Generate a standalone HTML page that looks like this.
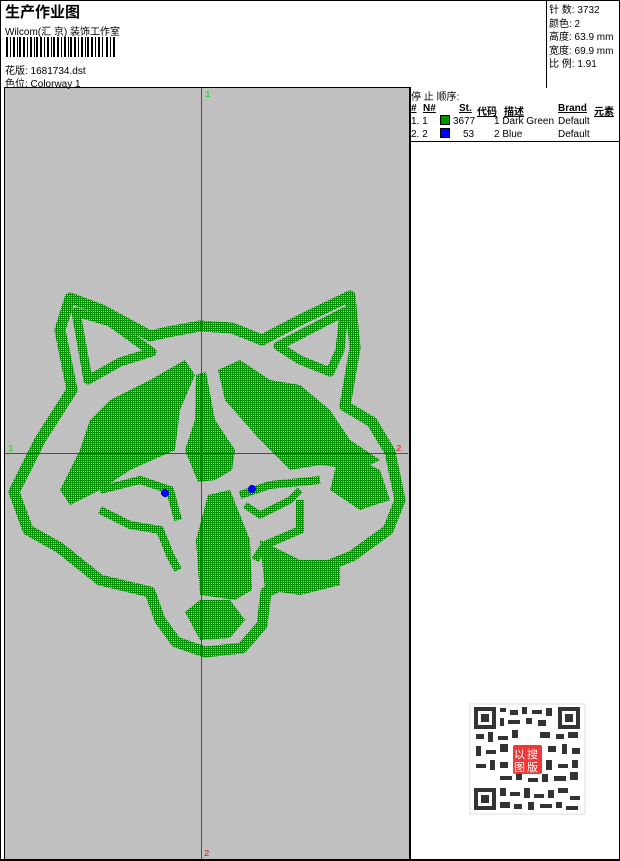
<!DOCTYPE html>
<html><head><meta charset="utf-8"><style>
*{margin:0;padding:0;box-sizing:border-box}
body{width:620px;height:861px;background:#fff;position:relative;overflow:hidden;font-family:"Liberation Sans","Noto Sans CJK SC",sans-serif;font-size:10px;color:#000}
.a{position:absolute;white-space:nowrap}
</style></head><body>
<div class="a" style="left:0;top:0;width:620px;height:861px;border:1px solid #000;border-bottom:2px solid #000"></div>
<div class="a" style="left:546px;top:0;width:1px;height:88px;background:#000"></div>
<div class="a" style="left:4px;top:87px;width:405px;height:772px;background:#c0c0c0;border-left:1px solid #000;border-top:1px solid #000"></div>
<div class="a" style="left:409px;top:87px;width:2px;height:773px;background:#000"></div>
<div class="a" style="left:410px;top:141px;width:210px;height:1px;background:#000"></div>
<div class="a" style="left:5px;top:1px;font-size:15px;font-weight:bold">生产作业图</div>
<div class="a" style="left:5px;top:23px;font-size:10px">Wilcom(汇 京) 装饰工作室</div>
<svg class="a" style="left:6px;top:37px" width="112" height="20">
<g fill="#000">
<rect x="0" width="2" height="20"/><rect x="4" width="1" height="20"/><rect x="7" width="2" height="20"/><rect x="11" width="1" height="20"/><rect x="13" width="2" height="20"/><rect x="17" width="2" height="20"/><rect x="21" width="1" height="20"/><rect x="24" width="2" height="20"/><rect x="28" width="1" height="20"/><rect x="30" width="2" height="20"/><rect x="34" width="2" height="20"/><rect x="38" width="1" height="20"/><rect x="41" width="2" height="20"/><rect x="45" width="1" height="20"/><rect x="47" width="2" height="20"/><rect x="51" width="2" height="20"/><rect x="55" width="1" height="20"/><rect x="58" width="2" height="20"/><rect x="62" width="1" height="20"/><rect x="64" width="2" height="20"/><rect x="68" width="2" height="20"/><rect x="72" width="1" height="20"/><rect x="75" width="2" height="20"/><rect x="79" width="1" height="20"/><rect x="81" width="2" height="20"/><rect x="85" width="2" height="20"/><rect x="89" width="1" height="20"/><rect x="92" width="2" height="20"/><rect x="96" width="1" height="20"/><rect x="100" width="2" height="20"/><rect x="104" width="1" height="20"/><rect x="107" width="2" height="20"/>
</g></svg>
<div class="a" style="left:5px;top:62px">花版: 1681734.dst</div>
<div class="a" style="left:5px;top:75px">色位: Colorway 1</div>
<div class="a" style="left:549px;top:4px;line-height:13.5px">针 数: 3732<br>颜色: 2<br>高度: 63.9 mm<br>宽度: 69.9 mm<br>比 例: 1.91</div>
<div class="a" style="left:411px;top:88px">停 止 顺序:</div>
<div class="a" style="left:411px;top:103px;font-weight:bold;text-decoration:underline">#</div>
<div class="a" style="left:423px;top:103px;font-weight:bold;text-decoration:underline">N#</div>
<div class="a" style="left:459px;top:103px;font-weight:bold;text-decoration:underline">St.</div>
<div class="a" style="left:477px;top:103px;font-weight:bold;text-decoration:underline">代码</div>
<div class="a" style="left:504px;top:103px;font-weight:bold;text-decoration:underline">描述</div>
<div class="a" style="left:558px;top:103px;font-weight:bold;text-decoration:underline">Brand</div>
<div class="a" style="left:594px;top:103px;font-weight:bold;text-decoration:underline">元素</div>
<div class="a" style="left:411px;top:116px">1. 1</div>
<div class="a" style="left:440px;top:115px;width:10px;height:10px;background:#009000;border:1px solid #000"></div>
<div class="a" style="left:453px;top:116px">3677</div>
<div class="a" style="left:494px;top:116px">1 Dark Green</div>
<div class="a" style="left:558px;top:116px">Default</div>
<div class="a" style="left:411px;top:129px">2. 2</div>
<div class="a" style="left:440px;top:128px;width:10px;height:10px;background:#0000ff;border:1px solid #000"></div>
<div class="a" style="left:463px;top:129px">53</div>
<div class="a" style="left:494px;top:129px">2 Blue</div>
<div class="a" style="left:558px;top:129px">Default</div>
<svg class="a" style="left:0;top:0" width="620" height="861" shape-rendering="crispEdges">
<defs>
<pattern id="h" width="2" height="2" patternUnits="userSpaceOnUse"><rect width="1" height="2" fill="#009000"/><rect x="1" y="0" width="1" height="1" fill="#009000"/></pattern>
<pattern id="v" width="2" height="2" patternUnits="userSpaceOnUse"><rect width="2" height="1" fill="#009000"/><rect x="0" y="1" width="1" height="1" fill="#009000"/></pattern>
</defs>
<g fill="none" stroke="url(#h)" stroke-width="11" stroke-linejoin="round">
<path d="M70,298 L60,330 L72,390 L40,440 L14,492 L28,530 L60,548 L100,580 L150,592 L160,620 L176,642 L205,652 L242,648 L262,625 L266,592 L300,577 L352,556 L388,530 L400,500 L390,452 L372,422 L345,406 L355,348 L350,296 L300,320 L262,340 L232,328 L200,326 L168,332 L150,336 L102,310 Z"/>
<path d="M76,312 L88,380 L120,362 L152,352 L110,322 Z" stroke-width="9"/>
<path d="M344,312 L340,350 L330,372 L300,360 L278,346 Z" stroke-width="9"/>
<path d="M100,490 L140,480 L170,490 L178,520" stroke-width="8"/>
<path d="M240,495 L270,485 L320,480" stroke-width="8"/>
<path d="M245,505 L260,515 L290,500 L300,490" stroke-width="7"/>
<path d="M100,510 L130,525 L160,530 L170,555 L178,570" stroke-width="8"/>
<path d="M300,500 L300,530 L265,545 L255,560" stroke-width="8"/>
</g>
<g fill="url(#h)">
<path d="M90,420 L110,400 L150,380 L185,360 L195,375 L180,410 L175,450 L130,470 L100,490 L70,505 L60,490 L80,450 Z"/>
<path d="M218,370 L240,360 L270,380 L300,385 L330,410 L350,440 L380,460 L360,470 L320,465 L290,470 L260,440 L225,400 Z"/>
<path d="M340,450 L380,470 L390,500 L360,510 L330,490 Z"/>
<path d="M260,540 L300,560 L340,560 L340,585 L300,595 L265,590 Z"/>
<path d="M185,612 L200,600 L230,600 L245,620 L230,638 L200,640 Z"/>
</g>
<g fill="url(#v)">
<path d="M196,375 L206,372 L215,420 L235,450 L232,470 L215,480 L198,482 L185,450 L195,420 Z"/>
<path d="M208,495 L230,490 L250,540 L252,590 L235,600 L200,595 L196,540 Z"/>
</g>
<g fill="#0000ff"><circle cx="165" cy="493" r="4"/><circle cx="252" cy="489" r="4"/></g>
<rect x="201" y="88" width="1" height="771" fill="#ff0000"/>
<rect x="5" y="453" width="403" height="1" fill="#ff0000"/>
<text x="205" y="97" fill="#00e000" font-size="9" font-family="Liberation Mono,monospace">1</text>
<text x="8" y="451" fill="#00e000" font-size="9" font-family="Liberation Mono,monospace">1</text>
<text x="396" y="451" fill="#f00" font-size="9" font-family="Liberation Mono,monospace">2</text>
<text x="204" y="856" fill="#f00" font-size="9" font-family="Liberation Mono,monospace">2</text>
<rect x="470" y="704" width="115" height="110" fill="#fff" stroke="#ddd"/>
<g fill="#333">
<rect x="474" y="707" width="22" height="22"/><rect x="478" y="711" width="14" height="14" fill="#fff"/><rect x="481" y="714" width="8" height="8"/>
<rect x="558" y="707" width="22" height="22"/><rect x="562" y="711" width="14" height="14" fill="#fff"/><rect x="565" y="714" width="8" height="8"/>
<rect x="474" y="788" width="22" height="22"/><rect x="478" y="792" width="14" height="14" fill="#fff"/><rect x="481" y="795" width="8" height="8"/>
<path d="M500,708h6v4h-6zM510,710h8v5h-8zM522,707h5v7h-5zM532,710h10v4h-10zM546,708h6v8h-6zM500,718h4v8h-4zM508,720h12v4h-12zM526,718h6v6h-6zM538,720h8v6h-8zM476,734h8v5h-8zM488,732h5v10h-5zM498,736h10v4h-10zM512,730h6v8h-6zM540,732h10v6h-10zM556,734h8v5h-8zM568,732h10v6h-10zM476,746h5v10h-5zM486,750h10v4h-10zM500,744h8v8h-8zM548,746h8v6h-8zM562,744h5v10h-5zM572,748h8v6h-8zM476,764h10v4h-10zM490,760h5v10h-5zM500,762h8v6h-8zM546,760h6v10h-6zM558,764h10v4h-10zM572,760h6v8h-6zM500,776h12v4h-12zM516,772h6v8h-6zM528,778h10v4h-10zM542,774h6v8h-6zM554,776h12v5h-12zM570,772h8v8h-8zM500,788h6v8h-6zM510,792h10v4h-10zM524,788h6v10h-6zM534,794h10v4h-10zM548,790h6v8h-6zM558,788h10v5h-10zM570,796h10v4h-10zM500,802h10v6h-10zM514,804h8v5h-8zM528,802h6v8h-6zM540,804h12v4h-12zM556,802h6v6h-6zM566,806h12v4h-12z"/>
</g>
<rect x="513" y="745" width="29" height="29" fill="#f03838" rx="2"/>
<text x="514" y="758" fill="#fff" font-size="11" font-family="Noto Sans CJK SC,sans-serif">以</text>
<text x="527" y="758" fill="#fff" font-size="11" font-family="Noto Sans CJK SC,sans-serif">搜</text>
<text x="514" y="771" fill="#fff" font-size="11" font-family="Noto Sans CJK SC,sans-serif">图</text>
<text x="527" y="771" fill="#fff" font-size="11" font-family="Noto Sans CJK SC,sans-serif">版</text>
</svg>
</body></html>
